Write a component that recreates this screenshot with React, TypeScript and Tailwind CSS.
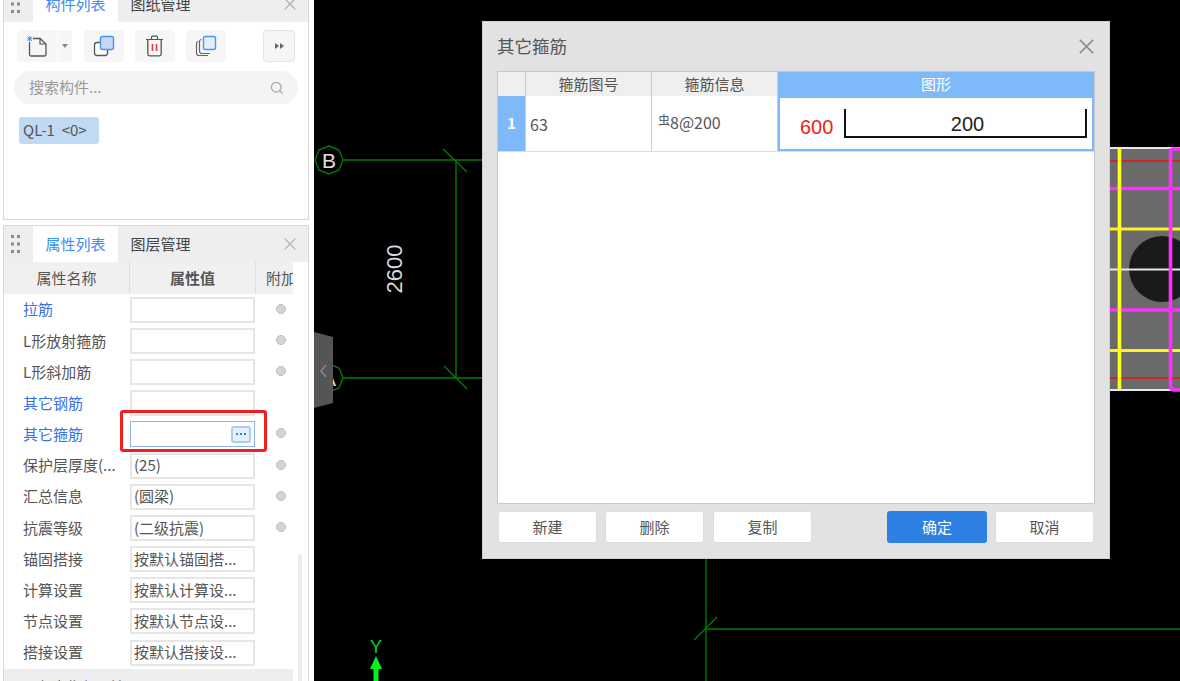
import React from "react";

function Grip() {
  return (
    <svg width="9" height="18" viewBox="0 0 9 18" className="shrink-0">
      {[0, 7.5, 15].map((y) => (
        <g key={y} fill="#8a8a8a">
          <rect x="0" y={y} width="3" height="3" />
          <rect x="6" y={y} width="3" height="3" />
        </g>
      ))}
    </svg>
  );
}

function CloseX({ size = 12, color = "#aaaaaa" }: { size?: number; color?: string }) {
  return (
    <svg width={size} height={size} viewBox="0 0 12 12" className="shrink-0">
      <path d="M.7.7 11.3 11.3M11.3.7.7 11.3" stroke={color} strokeWidth="1.2" fill="none" />
    </svg>
  );
}

function TabBar({ active, other, height }: { active: string; other: string; height: string }) {
  return (
    <div className={`flex items-stretch shrink-0 bg-[#eeeef0] ${height}`}>
      <div className="w-[29px] flex items-center pl-[7px]">
        <Grip />
      </div>
      <div className="w-[85px] bg-white flex items-center justify-center text-[15px] text-[#3c8df0]">{active}</div>
      <div className="w-[85px] flex items-center justify-center text-[15px] text-[#444444]">{other}</div>
      <div className="flex-1 flex items-center justify-end pr-[12px]">
        <CloseX />
      </div>
    </div>
  );
}

function Toolbar() {
  return (
    <div className="flex items-stretch h-[32px] mt-[8px] ml-[13px] mr-[13px]">
      <div className="w-[40px] bg-[#f6f6f7] rounded-l-[4px] flex items-center justify-center">
        <svg width="22" height="22" viewBox="0 0 22 22">
          <path d="M3.5 3.5H14L20 9V19.5a1.5 1.5 0 0 1-1.5 1.5H5a1.5 1.5 0 0 1-1.5-1.5Z" fill="none" stroke="#555" strokeWidth="1.3" />
          <path d="M14 3.5V9H20" fill="none" stroke="#555" strokeWidth="1.2" />
          <rect x="1" y="1" width="6" height="6" fill="#fff" />
          <path d="M1.5 1.5 6 6M6 1.5 1.5 6M3.8 1v5.5M1 3.8h5.5" stroke="#3c8df0" strokeWidth="1" />
        </svg>
      </div>
      <div className="w-[14px] ml-[1px] bg-[#f6f6f7] rounded-r-[4px] flex items-center justify-center">
        <div className="w-0 h-0 border-x-[3.5px] border-x-transparent border-t-[4px] border-t-[#888888]" />
      </div>
      <div className="w-[40px] ml-[12px] bg-[#f6f6f7] rounded-[4px] flex items-center justify-center">
        <svg width="22" height="22" viewBox="0 0 22 22">
          <rect x="1.5" y="7.5" width="13" height="13" rx="2.5" fill="#fff" stroke="#555" strokeWidth="1.3" />
          <rect x="7.5" y="1.5" width="13" height="13" rx="2" fill="#c6d9f3" stroke="#4a94ea" strokeWidth="1.4" />
        </svg>
      </div>
      <div className="w-[40px] ml-[11px] bg-[#f6f6f7] rounded-[4px] flex items-center justify-center">
        <svg width="20" height="22" viewBox="0 0 20 22">
          <path d="M1 4.5h17M6.5 4.5V2.2A1 1 0 0 1 7.5 1.2h4a1 1 0 0 1 1 1V4.5" fill="none" stroke="#555" strokeWidth="1.2" />
          <path d="M2.8 4.5V19a1.8 1.8 0 0 0 1.8 1.8h9.8A1.8 1.8 0 0 0 16.2 19V4.5" fill="none" stroke="#555" strokeWidth="1.3" />
          <path d="M7.5 9v7M11.5 9v7" stroke="#d8474d" strokeWidth="1.7" />
        </svg>
      </div>
      <div className="w-[40px] ml-[11px] bg-[#f6f6f7] rounded-[4px] flex items-center justify-center">
        <svg width="22" height="22" viewBox="0 0 22 22">
          <path d="M3.5 6.5A2 2 0 0 0 1.5 8.5V18A2.5 2.5 0 0 0 4 20.5H13" fill="none" stroke="#666" strokeWidth="1.2" />
          <path d="M6.5 4.5A2 2 0 0 0 4.5 6.5V16A2.5 2.5 0 0 0 7 18.5H15" fill="none" stroke="#666" strokeWidth="1.2" />
          <rect x="8.5" y="1.5" width="12" height="13" rx="2" fill="#e3effd" stroke="#4a94ea" strokeWidth="1.4" />
        </svg>
      </div>
      <div className="flex-1" />
      <div className="w-[32px] border border-[#e4e4e4] bg-[#f6f6f7] rounded-[4px] flex items-center justify-center gap-[1px]">
        <div className="w-0 h-0 border-y-[3.5px] border-y-transparent border-l-[4px] border-l-[#666666]" />
        <div className="w-0 h-0 border-y-[3.5px] border-y-transparent border-l-[4px] border-l-[#666666]" />
      </div>
    </div>
  );
}

const rows: { label: string; value?: string; blue?: boolean; radio?: boolean; active?: boolean }[] = [
  { label: "拉筋", blue: true, radio: true },
  { label: "L形放射箍筋", radio: true },
  { label: "L形斜加筋", radio: true },
  { label: "其它钢筋", blue: true },
  { label: "其它箍筋", blue: true, radio: true, active: true },
  { label: "保护层厚度(...", value: "(25)", radio: true },
  { label: "汇总信息", value: "(圆梁)", radio: true },
  { label: "抗震等级", value: "(二级抗震)", radio: true },
  { label: "锚固搭接", value: "按默认锚固搭..." },
  { label: "计算设置", value: "按默认计算设..." },
  { label: "节点设置", value: "按默认节点设..." },
  { label: "搭接设置", value: "按默认搭接设..." },
];

function PropRow({ row }: { row: (typeof rows)[number] }) {
  return (
    <div className="flex items-center h-[31.2px] shrink-0">
      <div className={`w-[126px] pl-[19px] text-[15px] whitespace-nowrap overflow-hidden ${row.blue ? "text-[#3a6fe6]" : "text-[#555555]"}`}>
        {row.label}
      </div>
      <div
        className={`w-[125px] h-[26px] flex items-center justify-between pl-[2px] pr-[3px] text-[15px] text-[#555555] whitespace-nowrap overflow-hidden bg-white ${
          row.active ? "border border-[#8fb2ea]" : "border-2 border-[#e6e6e6]"
        }`}
      >
        <span>{row.value}</span>
        {row.active && (
          <span className="w-[20px] h-[17px] rounded-[3px] border-2 border-[#a9cdf3] bg-[#e6f0fb] flex items-center justify-center gap-[2px]">
            <i className="w-[2px] h-[2px] bg-[#3c7fd8]" />
            <i className="w-[2px] h-[2px] bg-[#3c7fd8]" />
            <i className="w-[2px] h-[2px] bg-[#3c7fd8]" />
          </span>
        )}
      </div>
      <div className="flex-1 flex justify-center pl-[14px] -mt-[2px]">
        {row.radio && <span className="w-[10px] h-[10px] rounded-full bg-[#d4d4d4] border border-[#bdbdbd]" />}
      </div>
    </div>
  );
}

function Sidebar() {
  return (
    <div className="w-[314px] shrink-0 h-[681px] overflow-hidden bg-white pl-[3px] pr-[5px] flex flex-col">
      <div className="h-[235px] -mt-[15px] shrink-0 border border-[#d8d8d8] flex flex-col bg-white">
        <TabBar active="构件列表" other="图纸管理" height="h-[36px]" />
        <Toolbar />
        <div className="mx-[10px] mt-[9px] h-[33px] rounded-full bg-[#f4f4f5] flex items-center justify-between pl-[15px] pr-[14px] text-[15px] text-[#999999]">
          <span>搜索构件...</span>
          <svg width="14" height="14" viewBox="0 0 14 14">
            <circle cx="6.2" cy="6.2" r="4.8" fill="none" stroke="#a8a8a8" strokeWidth="1.3" />
            <path d="M9.8 9.8 12.6 12.6" stroke="#a8a8a8" strokeWidth="1.3" />
          </svg>
        </div>
        <div className="mt-[13px] ml-[15px] w-[80px] h-[27px] rounded-[3px] bg-[#c0daf4] flex items-center pl-[4px] text-[15px] text-[#555555] whitespace-pre">
          {"QL-1  <0>"}
        </div>
      </div>
      <div className="h-[480px] mt-[5px] shrink-0 border border-[#d8d8d8] flex flex-col bg-white">
        <TabBar active="属性列表" other="图层管理" height="h-[36px]" />
        <div className="flex flex-1 min-h-0">
          <div className="w-[289px] shrink-0 flex flex-col">
            <div className="flex h-[32px] shrink-0 bg-[#f0f0f0] text-[15px] text-[#555555]">
              <div className="w-[126px] border-r border-[#dddddd] flex items-center justify-center">属性名称</div>
              <div className="w-[126px] border-r border-[#dddddd] flex items-center justify-center font-bold">属性值</div>
              <div className="flex-1 overflow-hidden flex items-center pl-[10px] whitespace-nowrap">附加</div>
            </div>
            {rows.map((r) => (
              <PropRow key={r.label} row={r} />
            ))}
            <div className="h-[40px] mt-[1px] shrink-0 bg-[#eeeeee] flex items-start pt-[7px] pl-[12px] text-[15px] text-[#555555] gap-[14px]">
              <div className="w-0 h-0 mt-[7px] border-y-[4px] border-y-transparent border-l-[5px] border-l-[#999999]" />
              <span>土建业务属性</span>
            </div>
          </div>
          <div className="ml-[5px] mt-[292px] w-[4px] h-[200px] rounded-t-[2px] bg-[#ececec]" />
        </div>
      </div>
    </div>
  );
}

function Canvas() {
  const g = "#007c00";
  return (
    <svg className="flex-1 h-[681px] block" viewBox="314 0 866 681">
      <rect x="314" y="0" width="866" height="681" fill="#000" />
      <g stroke={g} strokeWidth="1.4" fill="none">
        <path d="M343 160H482M343 378H482M456 160V378M443 149 467 172M444 366 467 389" />
        <polygon points="329,146 339,150 343,160 339,170 329,174 319,170 315,160 319,150" />
        <polygon points="329,364 339,368 343,378 339,388 329,392 319,388 315,378 319,368" />
        <path d="M706 558V681M706 629H1180M694 640 717 617" />
      </g>
      <text x="329" y="168" fill="#e0e0e0" fontSize="21" textAnchor="middle" fontFamily="Liberation Sans, sans-serif">B</text>
      <text x="329" y="386" fill="#e0e0e0" fontSize="21" textAnchor="middle" fontFamily="Liberation Sans, sans-serif">A</text>
      <text transform="translate(401.5 293.5) rotate(-90)" fill="#d8d8d8" fontSize="22" fontFamily="Liberation Sans, sans-serif">2600</text>
      <path d="M314 332 333 337V403L314 408Z" fill="#555555" />
      <path d="M326 365 321 371 326 377" stroke="#8a8a8a" strokeWidth="1.4" fill="none" />
      <g>
        <text x="376" y="653" fill="#00d020" fontSize="18" textAnchor="middle" fontFamily="Liberation Sans, sans-serif">Y</text>
        <path d="M376 656 382 669H378.5V681H373.5V669H370Z" fill="#00f020" />
      </g>
      <rect x="1108" y="148" width="72" height="243" fill="#6a6a6a" />
      <circle cx="1162" cy="269" r="33" fill="#1a1a1a" />
      <g strokeWidth="2" stroke="#e8e8e8">
        <path d="M1110 148H1180M1110 269.5H1180M1110 390H1180" />
      </g>
      <path d="M1110 161H1180M1110 378H1180" stroke="#f01010" strokeWidth="1.4" />
      <path d="M1110 188.5H1180M1110 310H1180" stroke="#ff30ff" strokeWidth="3.4" />
      <path d="M1110 229H1180M1110 350.5H1180" stroke="#fff020" strokeWidth="3.2" />
      <path d="M1119.5 148V390" stroke="#ffff20" strokeWidth="3.6" />
      <path d="M1180 149H1174Q1170.5 149 1170.5 152V386Q1170.5 390 1174 390H1180" stroke="#ff30ff" strokeWidth="3.6" fill="none" />
    </svg>
  );
}

function Btn({ children, w, ml, primary }: { children: string; w: string; ml: string; primary?: boolean }) {
  return (
    <button
      className={`h-[32px] rounded-[3px] text-[15px] ${w} ${ml} ${
        primary ? "bg-[#2e80e2] text-white" : "bg-white text-[#555555] border border-[#dddddd]"
      }`}
    >
      {children}
    </button>
  );
}

function Dialog() {
  return (
    <div className="absolute left-[482px] top-[21px] w-[628px] h-[538px] bg-[#e2e2e2] border border-[#cfcfcf] flex flex-col px-[14px] text-[15px] text-[#555555]">
      <div className="h-[49px] shrink-0 flex items-center justify-between pr-[1px]">
        <span className="text-[17.5px]">其它箍筋</span>
        <CloseX size={15} color="#8c8c8c" />
      </div>
      <div className="h-[433px] shrink-0 bg-white border border-[#c8c8c8] flex flex-col">
        <div className="flex h-[24px] shrink-0 bg-[#efefef]">
          <div className="w-[28px] border-r border-[#cccccc]" />
          <div className="w-[126px] border-r border-[#cccccc] flex items-center justify-center">箍筋图号</div>
          <div className="w-[126px] border-r border-[#cccccc] flex items-center justify-center">箍筋信息</div>
          <div className="flex-1 bg-[#7eb9fa] text-white flex items-center justify-center">图形</div>
        </div>
        <div className="flex h-[56px] shrink-0 border-b border-[#dddddd]">
          <div className="w-[28px] bg-[#7eb9fa] text-white font-bold flex items-center justify-center border-r border-[#cccccc]">1</div>
          <div className="w-[126px] border-r border-[#cccccc] flex items-center pl-[4px] text-[16px]">63</div>
          <div className="w-[126px] border-r border-[#cccccc] flex items-center pl-[6px] pb-[3px]">
            <span className="text-[12px] -translate-y-[2px]">虫</span>
            <span className="text-[16px]">8@200</span>
          </div>
          <div className="flex-1 border-2 border-[#7eb9fa] flex items-center pl-[20px] text-[20px] [font-family:'Liberation_Sans',sans-serif]">
            <span className="text-[#f02020] mt-[7px] w-[44px]">600</span>
            <div className="w-[243px] h-[29px] -mt-[1px] border-x-2 border-b-2 border-[#111111] flex items-start justify-center text-[#222222] rounded-b-[1px]">
              <span className="leading-[26px] ml-[4px] mt-[2px]">200</span>
            </div>
          </div>
        </div>
      </div>
      <div className="flex mt-[7px]">
        <Btn w="w-[99px]" ml="ml-[1px]">新建</Btn>
        <Btn w="w-[99px]" ml="ml-[8px]">删除</Btn>
        <Btn w="w-[99px]" ml="ml-[9px]">复制</Btn>
        <Btn w="w-[100px]" ml="ml-[75px]" primary>确定</Btn>
        <Btn w="w-[99px]" ml="ml-[8px]">取消</Btn>
      </div>
    </div>
  );
}

export default function App() {
  return (
    <div className="relative w-[1180px] h-[681px] overflow-hidden flex bg-black [font-family:'Noto_Sans_CJK_SC','Noto_Sans',sans-serif]">
      <Sidebar />
      <Canvas />
      <Dialog />
      <div className="absolute left-[120px] top-[410px] w-[147px] h-[42px] border-[3px] border-[#f01e1e] rounded-[3px]" />
    </div>
  );
}
